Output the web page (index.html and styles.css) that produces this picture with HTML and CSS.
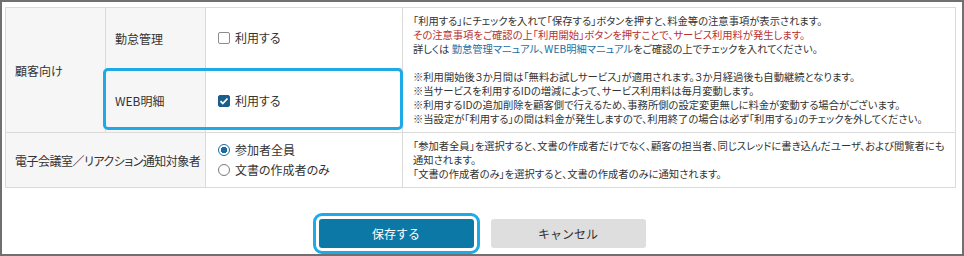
FILE: index.html
```html
<!DOCTYPE html>
<html lang="ja">
<head>
    <meta charset="UTF-8">
    <title>利用設定</title>
    <link rel="stylesheet" href="styles.css">
</head>
<body>
    <div class="frame">
        <div class="settings">
            <table class="settings-table">
                <colgroup>
                    <col class="col-group">
                    <col class="col-item">
                    <col class="col-option">
                    <col class="col-note">
                </colgroup>
                <tr class="row-top">
                    <th rowspan="2" class="label">顧客向け</th>
                    <th class="label">勤怠管理</th>
                    <td class="option">
                        <label class="choice"><span class="check"></span>利用する</label>
                    </td>
                    <td rowspan="2" class="note">
                        <p>「利用する」にチェックを入れて「保存する」ボタンを押すと、料金等の注意事項が表示されます。</p>
                        <p class="warn">その注意事項をご確認の上「利用開始」ボタンを押すことで、サービス利用料が発生します。</p>
                        <p>詳しくは <a href="#">勤怠管理マニュアル、WEB明細マニュアル</a>をご確認の上でチェックを入れてください。</p>
                        <p class="spaced">※利用開始後３か月間は「無料お試しサービス」が適用されます。３か月経過後も自動継続となります。</p>
                        <p>※当サービスを利用するIDの増減によって、サービス利用料は毎月変動します。</p>
                        <p>※利用するIDの追加削除を顧客側で行えるため、事務所側の設定変更無しに料金が変動する場合がございます。</p>
                        <p>※当設定が「利用する」の間は料金が発生しますので、利用終了の場合は必ず「利用する」のチェックを外してください。</p>
                    </td>
                </tr>
                <tr class="row-web">
                    <th class="label">WEB明細</th>
                    <td class="option">
                        <label class="choice"><span class="check checked"></span>利用する</label>
                    </td>
                </tr>
                <tr class="row-notify">
                    <th colspan="2" class="label long">電子会議室／リアクション通知対象者</th>
                    <td class="option">
                        <label class="choice"><span class="radio selected"></span>参加者全員</label>
                        <label class="choice"><span class="radio"></span>文書の作成者のみ</label>
                    </td>
                    <td class="note">
                        <p>「参加者全員」を選択すると、文書の作成者だけでなく、顧客の担当者、同じスレッドに書き込んだユーザ、および閲覧者にも通知されます。</p>
                        <p>「文書の作成者のみ」を選択すると、文書の作成者のみに通知されます。</p>
                    </td>
                </tr>
            </table>
            <!-- highlight around the WEB明細 row -->
            <div class="highlight"></div>
        </div>

        <div class="actions">
            <button class="btn btn-save">保存する</button>
            <button class="btn btn-cancel">キャンセル</button>
        </div>
    </div>
</body>
</html>
```

FILE: styles.css
```css
/* Basic styling */
body {
    margin: 0;
    font-family: "Noto Sans CJK JP", "Noto Sans", sans-serif;
    font-feature-settings: "palt";
    color: #333;
    background: #fff;
}

.frame {
    box-sizing: border-box;
    width: 964px;
    height: 256px;
    border: 2px solid #707070;
    padding: 5px 7px 0 3px;
}

/* Settings table */
.settings {
    position: relative;
}

.settings-table {
    width: 951px;
    border-collapse: collapse;
    table-layout: fixed;
}

.col-group { width: 100px; }
.col-item { width: 100px; }
.col-option { width: 197px; }

.settings-table th,
.settings-table td {
    border: 1px solid #dadada;
    vertical-align: middle;
    text-align: left;
}

.label {
    background: #f6f6f6;
    font-size: 12px;
    font-weight: normal;
    padding: 0 9px;
}

.label.long {
    white-space: nowrap;
    letter-spacing: -0.5px;
}

.row-top { height: 61px; }
.row-web { height: 64px; }
.row-notify { height: 55px; }

.option {
    padding: 0 12px;
}

.choice {
    display: flex;
    align-items: center;
    gap: 5px;
    font-size: 12px;
    line-height: 20px;
}

.note {
    padding: 0 2px 0 10px;
    font-size: 10.3px;
    line-height: 14px;
}

.note p {
    margin: 0;
}

.note .spaced {
    margin-top: 14px;
}

.warn {
    color: #b83232;
}

.note a {
    color: #1f6ea0;
    text-decoration: none;
}

/* Checkbox and radio marks */
.check {
    box-sizing: border-box;
    width: 12px;
    height: 12px;
    border: 1px solid #8c8c8c;
    border-radius: 2px;
    background: #fff;
}

.check.checked {
    border-color: #1b5d8b;
    background: #1b5d8b url("data:image/svg+xml,%3Csvg xmlns='http://www.w3.org/2000/svg' viewBox='0 0 12 12'%3E%3Cpath d='M2.5 6.2l2.3 2.3 4.7-5' fill='none' stroke='%23fff' stroke-width='1.8'/%3E%3C/svg%3E") center / 12px no-repeat;
}

.radio {
    box-sizing: border-box;
    width: 12px;
    height: 12px;
    border: 1px solid #7a7a7a;
    border-radius: 50%;
    background: #fff;
}

.radio.selected {
    border-color: #1b6c9c;
    background: radial-gradient(circle, #1b6c9c 3px, #fff 3.5px);
}

.highlight {
    position: absolute;
    left: 98px;
    top: 61px;
    width: 300px;
    height: 62px;
    box-sizing: border-box;
    border: 3px solid #1eaae6;
    border-radius: 5px;
}

/* Buttons */
.actions {
    display: flex;
    justify-content: center;
    gap: 17px;
    margin-top: 31px;
    padding-left: 4px;
}

.btn {
    width: 155px;
    height: 29px;
    border: none;
    border-radius: 3px;
    font-family: inherit;
    font-size: 12px;
    cursor: pointer;
}

.btn-save {
    background: #0b78a6;
    color: #fff;
    outline: 3px solid #1eaae6;
    outline-offset: 3px;
}

.btn-cancel {
    background: #dedede;
    color: #333;
}
```
